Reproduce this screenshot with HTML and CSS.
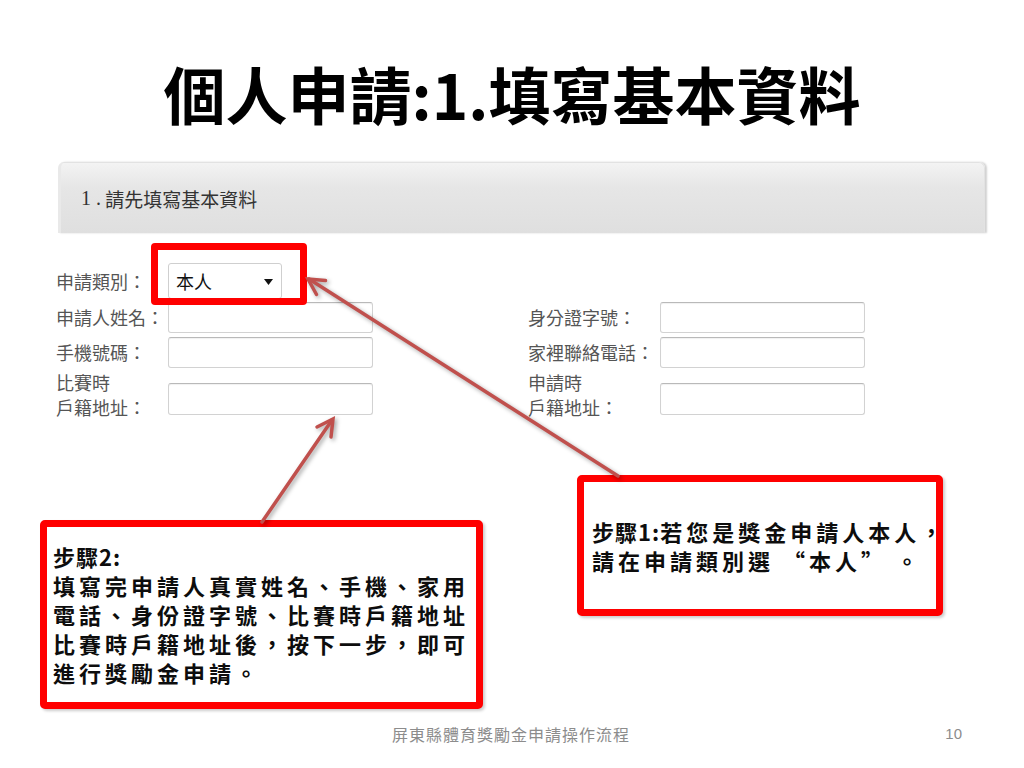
FILE: index.html
```html
<!DOCTYPE html>
<html lang="zh-Hant">
<head>
<meta charset="utf-8">
<title>個人申請:1.填寫基本資料</title>
<link rel="stylesheet" href="styles.css">
</head>
<body>
<div class="slide">
  <h1 class="title">個人申請:1.填寫基本資料</h1>

  <section class="shot">
    <div class="panel-head"><span class="num">1 .</span> 請先填寫基本資料</div>
    <div class="form">
      <label class="lbl">申請類別：</label>
      <div class="select"><span>本人</span><svg class="caret" width="9" height="6" viewBox="0 0 9 6"><path d="M0 0 H9 L4.5 6 Z" fill="#111"/></svg></div>

      <label class="lbl row2">申請人姓名：</label>
      <div class="input row2"></div>
      <label class="lbl right row2">身分證字號：</label>
      <div class="input right-in row2"></div>

      <label class="lbl row3">手機號碼：</label>
      <div class="input row3"></div>
      <label class="lbl right row3">家裡聯絡電話：</label>
      <div class="input right-in row3"></div>

      <label class="lbl two row4">比賽時<br>戶籍地址：</label>
      <div class="input low row4"></div>
      <label class="lbl two right row4">申請時<br>戶籍地址：</label>
      <div class="input low right-in row4"></div>
    </div>
  </section>

  <footer class="footer">
    <span class="foot-text">屏東縣體育獎勵金申請操作流程</span>
    <span class="page-no">10</span>
  </footer>

  <div class="highlight"></div>

  <div class="callout step1">
    <p class="callout-text"><span class="tight">步驟1:</span>若您是獎金申請人本人，<br>請在申請類別選 “本人” 。</p>
  </div>

  <div class="callout step2">
    <p class="callout-text"><span class="tight">步驟2:</span><br>填寫完申請人真實姓名、手機、家用<br>電話、身份證字號、比賽時戶籍地址<br>比賽時戶籍地址後，按下一步，即可<br>進行獎勵金申請。</p>
  </div>

  <svg class="arrows" width="1024" height="768" viewBox="0 0 1024 768">
    <g class="arrow">
      <line x1="618" y1="476" x2="309" y2="279"/>
      <polyline points="325.5,280.5 308,279 316.5,294.5"/>
      <line x1="262" y1="522" x2="332" y2="420"/>
      <polyline points="331,437 333,419 317,427"/>
    </g>
  </svg>
</div>
</body>
</html>
```

FILE: styles.css
```css
* { box-sizing: border-box; }

html, body {
  margin: 0;
  padding: 0;
  background: #ffffff;
}

body {
  font-family: "Noto Sans CJK TC", "Noto Sans CJK SC", "Noto Sans", sans-serif;
  color: #000;
}

.slide {
  position: relative;
  width: 1024px;
  height: 768px;
  overflow: hidden;
  display: flex;
  flex-direction: column;
  background: #fff;
}

.title {
  margin: 0;
  padding-top: 62px;
  font-size: 62px;
  line-height: 62px;
  font-weight: 700;
  text-align: center;
  color: #000;
  letter-spacing: 0;
}

.shot {
  margin-top: 38px;
  display: flex;
  flex-direction: column;
}

.panel-head {
  margin-left: 58px;
  width: 927px;
  height: 71px;
  display: flex;
  align-items: center;
  padding-left: 20px;
  font-size: 19px;
  color: #333;
  background: linear-gradient(to bottom, #f3f3f3 0%, #e6e6e6 35%, #dfdfdf 100%);
  border: 1px solid #e2e2e2;
  border-left: 3px solid #e9e9e9;
  border-bottom: none;
  border-radius: 6px 6px 0 0;
  box-shadow: 2px 0 2px rgba(0, 0, 0, 0.18);
  white-space: pre;
}

.num {
  font-family: "Liberation Serif", serif;
  font-size: 20px;
}

.form {
  margin-top: 29px;
  margin-left: 56px;
  display: grid;
  grid-template-columns: 112px 205px 155px 132px 205px;
  grid-template-rows: 38px 35px 35px 50px;
  align-items: center;
}

.lbl {
  grid-column: 1;
  font-size: 18px;
  line-height: 25px;
  color: #555;
  white-space: nowrap;
}

.lbl.right { grid-column: 4; }

.lbl.two { align-self: start; }

.row2 { grid-row: 2; }
.row3 { grid-row: 3; }
.row4 { grid-row: 4; }

.select {
  grid-column: 2;
  grid-row: 1;
  width: 114px;
  height: 36px;
  display: flex;
  align-items: center;
  justify-content: space-between;
  padding: 0 8px 0 7px;
  border: 1px solid #cfcfcf;
  border-radius: 3px;
  background: #fff;
  font-size: 18px;
  color: #111;
}

.caret { display: block; margin-top: 2px; }

.input {
  grid-column: 2;
  width: 205px;
  height: 31px;
  border: 1px solid #d2d2d2;
  border-top-color: #b9b9b9;
  border-radius: 3px;
  background: #fff;
  box-shadow: inset 0 1px 1px rgba(0, 0, 0, 0.06);
}

.input.right-in { grid-column: 5; }

.input.low {
  height: 32px;
  align-self: end;
  margin-bottom: 5px;
}

.footer {
  margin-top: auto;
  display: flex;
  justify-content: space-between;
  align-items: center;
  padding: 0 62px 24px 392px;
  font-size: 16px;
  line-height: 20px;
  color: #8c8c8c;
}

.foot-text { letter-spacing: 1px; }

.page-no {
  font-family: "Liberation Sans", sans-serif;
  font-size: 15px;
}

.highlight {
  position: absolute;
  left: 151px;
  top: 243px;
  width: 156px;
  height: 62px;
  border: 7px solid #ff0000;
  border-radius: 4px;
}

.callout {
  position: absolute;
  display: flex;
  align-items: center;
  background: #fff;
  border: 7px solid #ff0000;
  border-radius: 5px;
  box-shadow: 2px 2px 3px rgba(0, 0, 0, 0.2);
}

.step1 {
  left: 577px;
  top: 475px;
  width: 366px;
  height: 141px;
  padding-left: 8px;
}

.step2 {
  left: 40px;
  top: 520px;
  width: 443px;
  height: 189px;
  padding-left: 6px;
}

.callout-text {
  margin: 0;
  font-size: 22px;
  line-height: 29px;
  font-weight: 700;
  letter-spacing: 4px;
  white-space: nowrap;
  color: #0d0d0d;
}

.tight { letter-spacing: 1px; }

.arrows {
  position: absolute;
  left: 0;
  top: 0;
  pointer-events: none;
}

.arrow {
  fill: none;
  stroke: #c0504d;
  stroke-width: 3.5;
  stroke-linecap: round;
  stroke-linejoin: miter;
  filter: drop-shadow(2px 2px 2px rgba(0, 0, 0, 0.35));
}
```
